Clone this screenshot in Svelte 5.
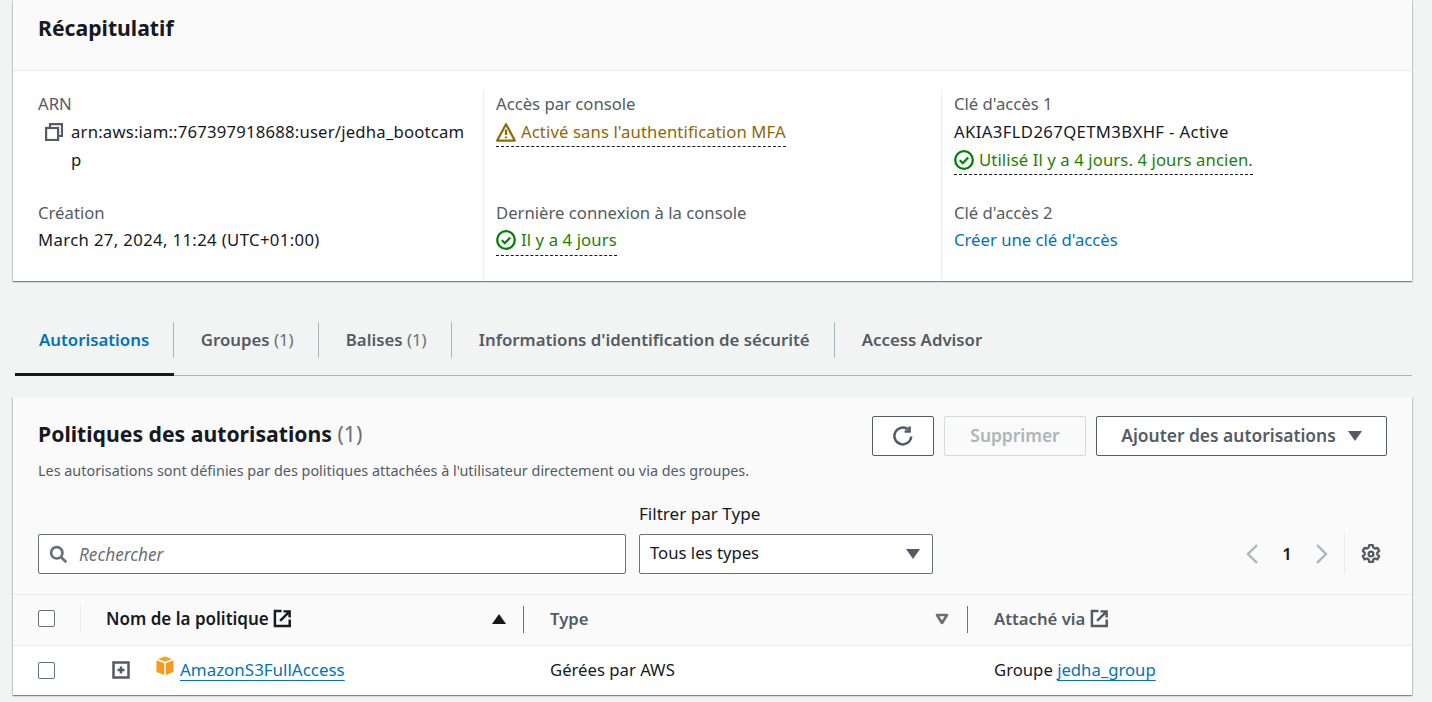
<script>
  const tabs = [
    { label: 'Autorisations', active: true },
    { label: 'Groupes', count: '(1)' },
    { label: 'Balises', count: '(1)' },
    { label: "Informations d'identification de sécurité" },
    { label: 'Access Advisor' }
  ];
</script>

{#snippet check()}
  <svg class="ic" viewBox="0 0 20 20" width="20" height="20" fill="none" stroke="#037f0c" stroke-width="2.3"><circle cx="10" cy="10" r="8.8"/><path d="M5.8 10.2l3 3 5.4-5.7"/></svg>
{/snippet}
{#snippet ext(color)}
  <svg class="ext" viewBox="0 0 20 20" width="20" height="20" fill="none" stroke={color} stroke-width="2.6"><path d="M9 2.2H2v15.6h15.6V11"/><path d="M7.5 12.5L17 3M11 2.5h6.5V9"/></svg>
{/snippet}

<div class="page">
  <section class="card summary">
    <header class="summary-head"><h2>Récapitulatif</h2></header>
    <div class="cols">
      <div class="col first">
        <div class="item">
          <div class="label">ARN</div>
          <div class="arn">
            <svg class="copy" viewBox="0 0 18 18" width="18" height="18" fill="none" stroke="#545b64" stroke-width="2.2"><rect x="1.1" y="5" width="12" height="12"/><path d="M5 4V1.1h12V13h-3"/></svg>
            <span class="arn-text">arn:aws:iam::767397918688:user/jedha_bootcamp</span>
          </div>
        </div>
        <div class="item">
          <div class="label">Création</div>
          <div class="value num">March 27, 2024, 11:24 (UTC+01:00)</div>
        </div>
      </div>
      <div class="col">
        <div class="item">
          <div class="label">Accès par console</div>
          <div class="value"><span class="status warn">
            <svg class="ic" viewBox="0 0 20 20" width="20" height="20" fill="none" stroke="#906806" stroke-width="2.2"><path d="M10 2.2L1.2 18.6h17.6z" stroke-linejoin="round"/><path d="M10 7.5v5.5M10 14.4v1.8"/></svg>
            Activé sans l'authentification MFA</span></div>
        </div>
        <div class="item">
          <div class="label">Dernière connexion à la console</div>
          <div class="value"><span class="status ok">{@render check()}Il y a 4 jours</span></div>
        </div>
      </div>
      <div class="col">
        <div class="item">
          <div class="label">Clé d'accès 1</div>
          <div class="value num">AKIA3FLD267QETM3BXHF - Active</div>
          <div class="value"><span class="status ok">{@render check()}Utilisé Il y a 4 jours. 4 jours ancien.</span></div>
        </div>
        <div class="item">
          <div class="label">Clé d'accès 2</div>
          <div class="value"><span class="link">Créer une clé d'accès</span></div>
        </div>
      </div>
    </div>
  </section>

  <nav class="tabs">
    {#each tabs as t}
      <div class="tab" class:active={t.active}><span class="tab-in">{t.label}{#if t.count}{' '}<span class="count">{t.count}</span>{/if}</span></div>
    {/each}
  </nav>

  <section class="card policies">
    <div class="pol-head">
      <div class="head-row">
        <div>
          <h2 class="pol-title">Politiques des autorisations <span class="title-count">(1)</span></h2>
          <p class="desc">Les autorisations sont définies par des politiques attachées à l'utilisateur directement ou via des groupes.</p>
        </div>
        <div class="actions">
          <button class="btn refresh" aria-label="Actualiser">
            <svg viewBox="0 0 22 22" width="22" height="22" fill="none" stroke="#545b64" stroke-width="2.5"><path d="M19.2 11.5a8.4 8.4 0 1 1-3-7"/><path d="M17.6 1.4v5h-5"/></svg>
          </button>
          <button class="btn disabled">Supprimer</button>
          <button class="btn add">Ajouter des autorisations <i class="caret"></i></button>
        </div>
      </div>
      <div class="filters">
        <div class="search">
          <svg viewBox="0 0 20 20" width="19" height="19" fill="none" stroke="#687078" stroke-width="2.8"><circle cx="8.2" cy="8.2" r="6"/><path d="M12.6 12.6l5.6 5.6"/></svg>
          <span>Rechercher</span>
        </div>
        <div class="type-filter">
          <div class="filter-label">Filtrer par Type</div>
          <div class="select">Tous les types <i class="caret"></i></div>
        </div>
        <div class="pager">
          <svg viewBox="0 0 14 20" width="14" height="20" fill="none" stroke="#aab7b8" stroke-width="2.4"><path d="M12 1L3 10l9 9"/></svg>
          <span class="page-num">1</span>
          <svg viewBox="0 0 14 20" width="14" height="20" fill="none" stroke="#aab7b8" stroke-width="2.4"><path d="M2 1l9 9-9 9"/></svg>
          <div class="settings">
            <svg viewBox="0 0 20 20" width="20" height="20" fill="none" stroke="#545b64" stroke-width="2.3"><path d="M8.2 1.2h3.6l.5 2.4 1.7 1 2.4-.8 1.8 3.1-1.9 1.7v1.9l1.9 1.7-1.8 3.1-2.4-.8-1.7 1-.5 2.4H8.2l-.5-2.4-1.7-1-2.4.8-1.8-3.1 1.9-1.7V8.6L1.8 6.9l1.8-3.1 2.4.8 1.7-1z" stroke-linejoin="round"/><circle cx="10" cy="10" r="2.4"/></svg>
          </div>
        </div>
      </div>
    </div>

    <div class="table">
      <div class="row thead">
        <div class="c-check"><span class="box"></span></div>
        <div class="c-name strong">
          <span class="th-text">Nom de la politique</span>{@render ext('#16191f')}
          <i class="sort-up"></i>
        </div>
        <div class="c-type sep">
          <span class="th-text">Type</span>
          <svg class="sort-down" viewBox="0 0 14 12" width="14" height="12" fill="none" stroke="#687078" stroke-width="2.6"><path d="M2 2h10L7 10z" stroke-linejoin="round"/></svg>
        </div>
        <div class="c-via sep"><span class="th-text via-text">Attaché via</span>{@render ext('#545b64')}</div>
      </div>
      <div class="row tbody">
        <div class="c-check"><span class="box"></span></div>
        <div class="c-name body-name">
          <svg class="expand" viewBox="0 0 18 18" width="18" height="18" fill="none" stroke="#545b64" stroke-width="2.5"><rect x="1.5" y="1.5" width="15" height="15"/><path d="M9 5.5v7M5.5 9h7"/></svg>
          <svg class="cube" viewBox="0 0 18 20" width="18" height="20"><path d="M9 0.5l7 2.6L9 5.7 2 3.1z" fill="#f7a21b"/><path d="M0.5 4.3L8.2 7.2V19L0.5 16z" fill="#f7981f"/><path d="M17.5 4.3L9.8 7.2V19l7.7-3z" fill="#f7981f"/></svg>
          <span class="link under name-link">AmazonS3FullAccess</span>
        </div>
        <div class="c-type body-cell">Gérées par AWS</div>
        <div class="c-via body-cell">Groupe <span class="link under">jedha_group</span></div>
      </div>
    </div>
  </section>
</div>

<style>
  :global(body) {
    margin: 0;
    background: #f2f3f3;
    font-family: "Noto Sans", "Open Sans", sans-serif;
    font-size: 16.7px;
    color: #16191f;
  }
  .page {
    height: 702px;
    overflow: hidden;
    padding: 0 20px 0 13px;
    box-sizing: border-box;
  }
  .card {
    background: #fff;
    box-shadow: 0 1px 1px 0 rgba(0, 28, 36, 0.3), 1px 1px 1px 0 rgba(0, 28, 36, 0.15), -1px 1px 1px 0 rgba(0, 28, 36, 0.15);
  }
  .summary-head {
    height: 71px;
    box-sizing: border-box;
    background: #fafafa;
    border-bottom: 1px solid #eaeded;
    padding: 13px 25px 0;
  }
  h2 {
    margin: 0;
    font-size: 21.2px;
    line-height: 30px;
    font-weight: 700;
  }
  .cols {
    display: grid;
    grid-template-columns: 470px 458px 1fr;
    padding-top: 19px;
    height: 210px;
    box-sizing: border-box;
    padding-bottom: 13px;
  }
  .col {
    padding: 0 12px;
    border-left: 1px solid #eaeded;
    display: flex;
    flex-direction: column;
    gap: 27px;
  }
  .col.first {
    border-left: 0;
    padding-left: 25px;
    padding-right: 18px;
  }
  .item {
    min-height: 82px;
    max-height: 82px;
  }
  .label {
    color: #545b64;
    line-height: 28px;
    height: 28px;
  }
  .item + .item .label { height: 27px; }
  .value {
    line-height: 28px;
    height: 28px;
    white-space: nowrap;
  }
  .num { letter-spacing: 0.37px; }
  .arn {
    display: flex;
    line-height: 27.5px;
    padding-left: 7px;
    gap: 8px;
    letter-spacing: 0.2px;
  }
  .copy { flex: none; margin-top: 5px; }
  .arn-text { word-break: break-all; }
  .status {
    display: inline-flex;
    align-items: center;
    gap: 5px;
    height: 28px;
    border-bottom: 1px dashed #16191f;
    box-sizing: content-box;
    letter-spacing: 0.1px;
  }
  .item + .item .status { padding-bottom: 1px; }
  .ic { flex: none; }
  .warn { color: #906806; }
  .ok { color: #1d8102; }
  .link { color: #0073bb; }
  .under { text-decoration: underline; text-underline-offset: 4px; }

  .tabs {
    display: flex;
    margin-top: 41px;
    margin-left: 2px;
    height: 54px;
    box-sizing: border-box;
    border-bottom: 1px solid #aab7b8;
    font-weight: 600;
    font-size: 16.8px;
    color: #545b64;
  }
  .tab {
    height: 54px;
    box-sizing: border-box;
  }
  .tab-in {
    display: block;
    height: 36px;
    line-height: 36px;
    padding: 0 24.6px 0 26.6px;
    border-right: 1px solid #aab7b8;
  }
  .tab:first-child .tab-in { padding-left: 24px; padding-right: 24px; }
  .tab:last-child .tab-in { border-right: 0; }
  .tab.active { color: #0073bb; border-bottom: 3px solid #16191f; }
  .count { font-weight: 400; color: #687078; }

  .policies {
    margin-top: 21px;
    background: #fafafa;
  }
  .pol-head { padding: 20px 25px 20px; height: 197px; box-sizing: border-box; }
  .head-row { display: flex; justify-content: space-between; align-items: flex-start; height: 88px; }
  .pol-title { line-height: 34px; }
  .title-count { font-weight: 400; color: #687078; }
  .desc { margin: 10px 0 0; font-size: 14.4px; line-height: 20px; color: #545b64; }
  .actions { display: flex; gap: 10px; margin-top: -1px; }
  .btn {
    height: 40px;
    box-sizing: border-box;
    border: 1px solid #545b64;
    border-radius: 2px;
    background: #fff;
    color: #545b64;
    font: 600 17.4px "Noto Sans", "Open Sans", sans-serif;
    display: flex;
    align-items: center;
    justify-content: center;
    padding: 0 0 2px;
  }
  .refresh { width: 62px; padding: 0; }
  .disabled { width: 142px; border-color: #d5dbdb; color: #aab7b8; background: #fafafa; }
  .add { width: 291px; gap: 12px; }
  .caret {
    display: inline-block;
    width: 0;
    height: 0;
    border-left: 7.5px solid transparent;
    border-right: 7.5px solid transparent;
    border-top: 10px solid #545b64;
    margin-top: 2px;
  }
  .filters { display: flex; align-items: flex-end; margin-top: -2px; }
  .search {
    width: 588px;
    height: 40px;
    box-sizing: border-box;
    border: 1px solid #687078;
    border-radius: 2px;
    background: #fff;
    display: flex;
    align-items: center;
    gap: 11px;
    padding-left: 10px;
    font-style: italic;
    font-size: 17.2px;
    color: #687078;
  }
  .type-filter { margin-left: 13px; width: 294px; }
  .filter-label { line-height: 22px; margin-bottom: 9px; font-size: 17.1px; }
  .select {
    height: 40px;
    box-sizing: border-box;
    border: 1px solid #687078;
    border-radius: 2px;
    background: #fff;
    display: flex;
    align-items: center;
    justify-content: space-between;
    padding: 0 12px 3px 10px;
  }
  .pager {
    margin-left: auto;
    margin-right: 6px;
    height: 40px;
    display: flex;
    align-items: center;
  }
  .page-num { font-weight: 600; width: 56px; text-align: center; padding-bottom: 2px; }
  .settings {
    margin-left: 15px;
    padding-left: 16px;
    height: 40px;
    display: flex;
    align-items: center;
    border-left: 1px solid #eaeded;
  }
  .table { border-top: 1px solid #eaeded; }
  .row { display: grid; grid-template-columns: 68px 442px 444px 1fr; align-items: stretch; }
  .thead { height: 51px; border-bottom: 1px solid #eaeded; font-weight: 600; color: #545b64; box-sizing: border-box; }
  .thead > div { display: flex; align-items: center; position: relative; padding-bottom: 3px; }
  .thead .sep, .thead .strong { padding-bottom: 4px; }
  .tbody { height: 49px; background: #fff; }
  .tbody > div { display: flex; align-items: center; padding-bottom: 1px; }
  .tbody .body-cell, .tbody .body-name { padding-bottom: 2px; }
  .c-check { padding-left: 25px; }
  .thead .c-check::after {
    content: "";
    position: absolute;
    right: 0;
    top: 11px;
    height: 26px;
    border-right: 1px solid #eaeded;
  }
  .box {
    width: 15px;
    height: 15px;
    border: 1px solid #687078;
    border-radius: 2px;
    background: #fff;
    display: block;
  }
  .strong { color: #16191f; padding-left: 25px; font-size: 17px; }
  .th-text { margin-right: 4px; }
  .via-text { margin-right: 5px; }
  .ext { width: 19px; height: 19px; }
  .sort-up {
    position: absolute;
    right: 17px;
    top: 19px;
    width: 0;
    height: 0;
    border-left: 7px solid transparent;
    border-right: 7px solid transparent;
    border-bottom: 10px solid #16191f;
  }
  .sep { padding-left: 27px; }
  .thead .sep::before {
    content: "";
    position: absolute;
    left: 0;
    top: 11px;
    height: 27px;
    border-left: 1px solid #687078;
  }
  .sort-down { position: absolute; right: 18px; top: 18px; }
  .body-name { padding-left: 31px; }
  .expand { margin-right: 26px; margin-top: 1px; }
  .cube { margin-right: 6px; margin-top: -7px; }
  .name-link { font-size: 16.95px; }
  .body-cell { padding-left: 27px; white-space: pre-wrap; }
</style>
